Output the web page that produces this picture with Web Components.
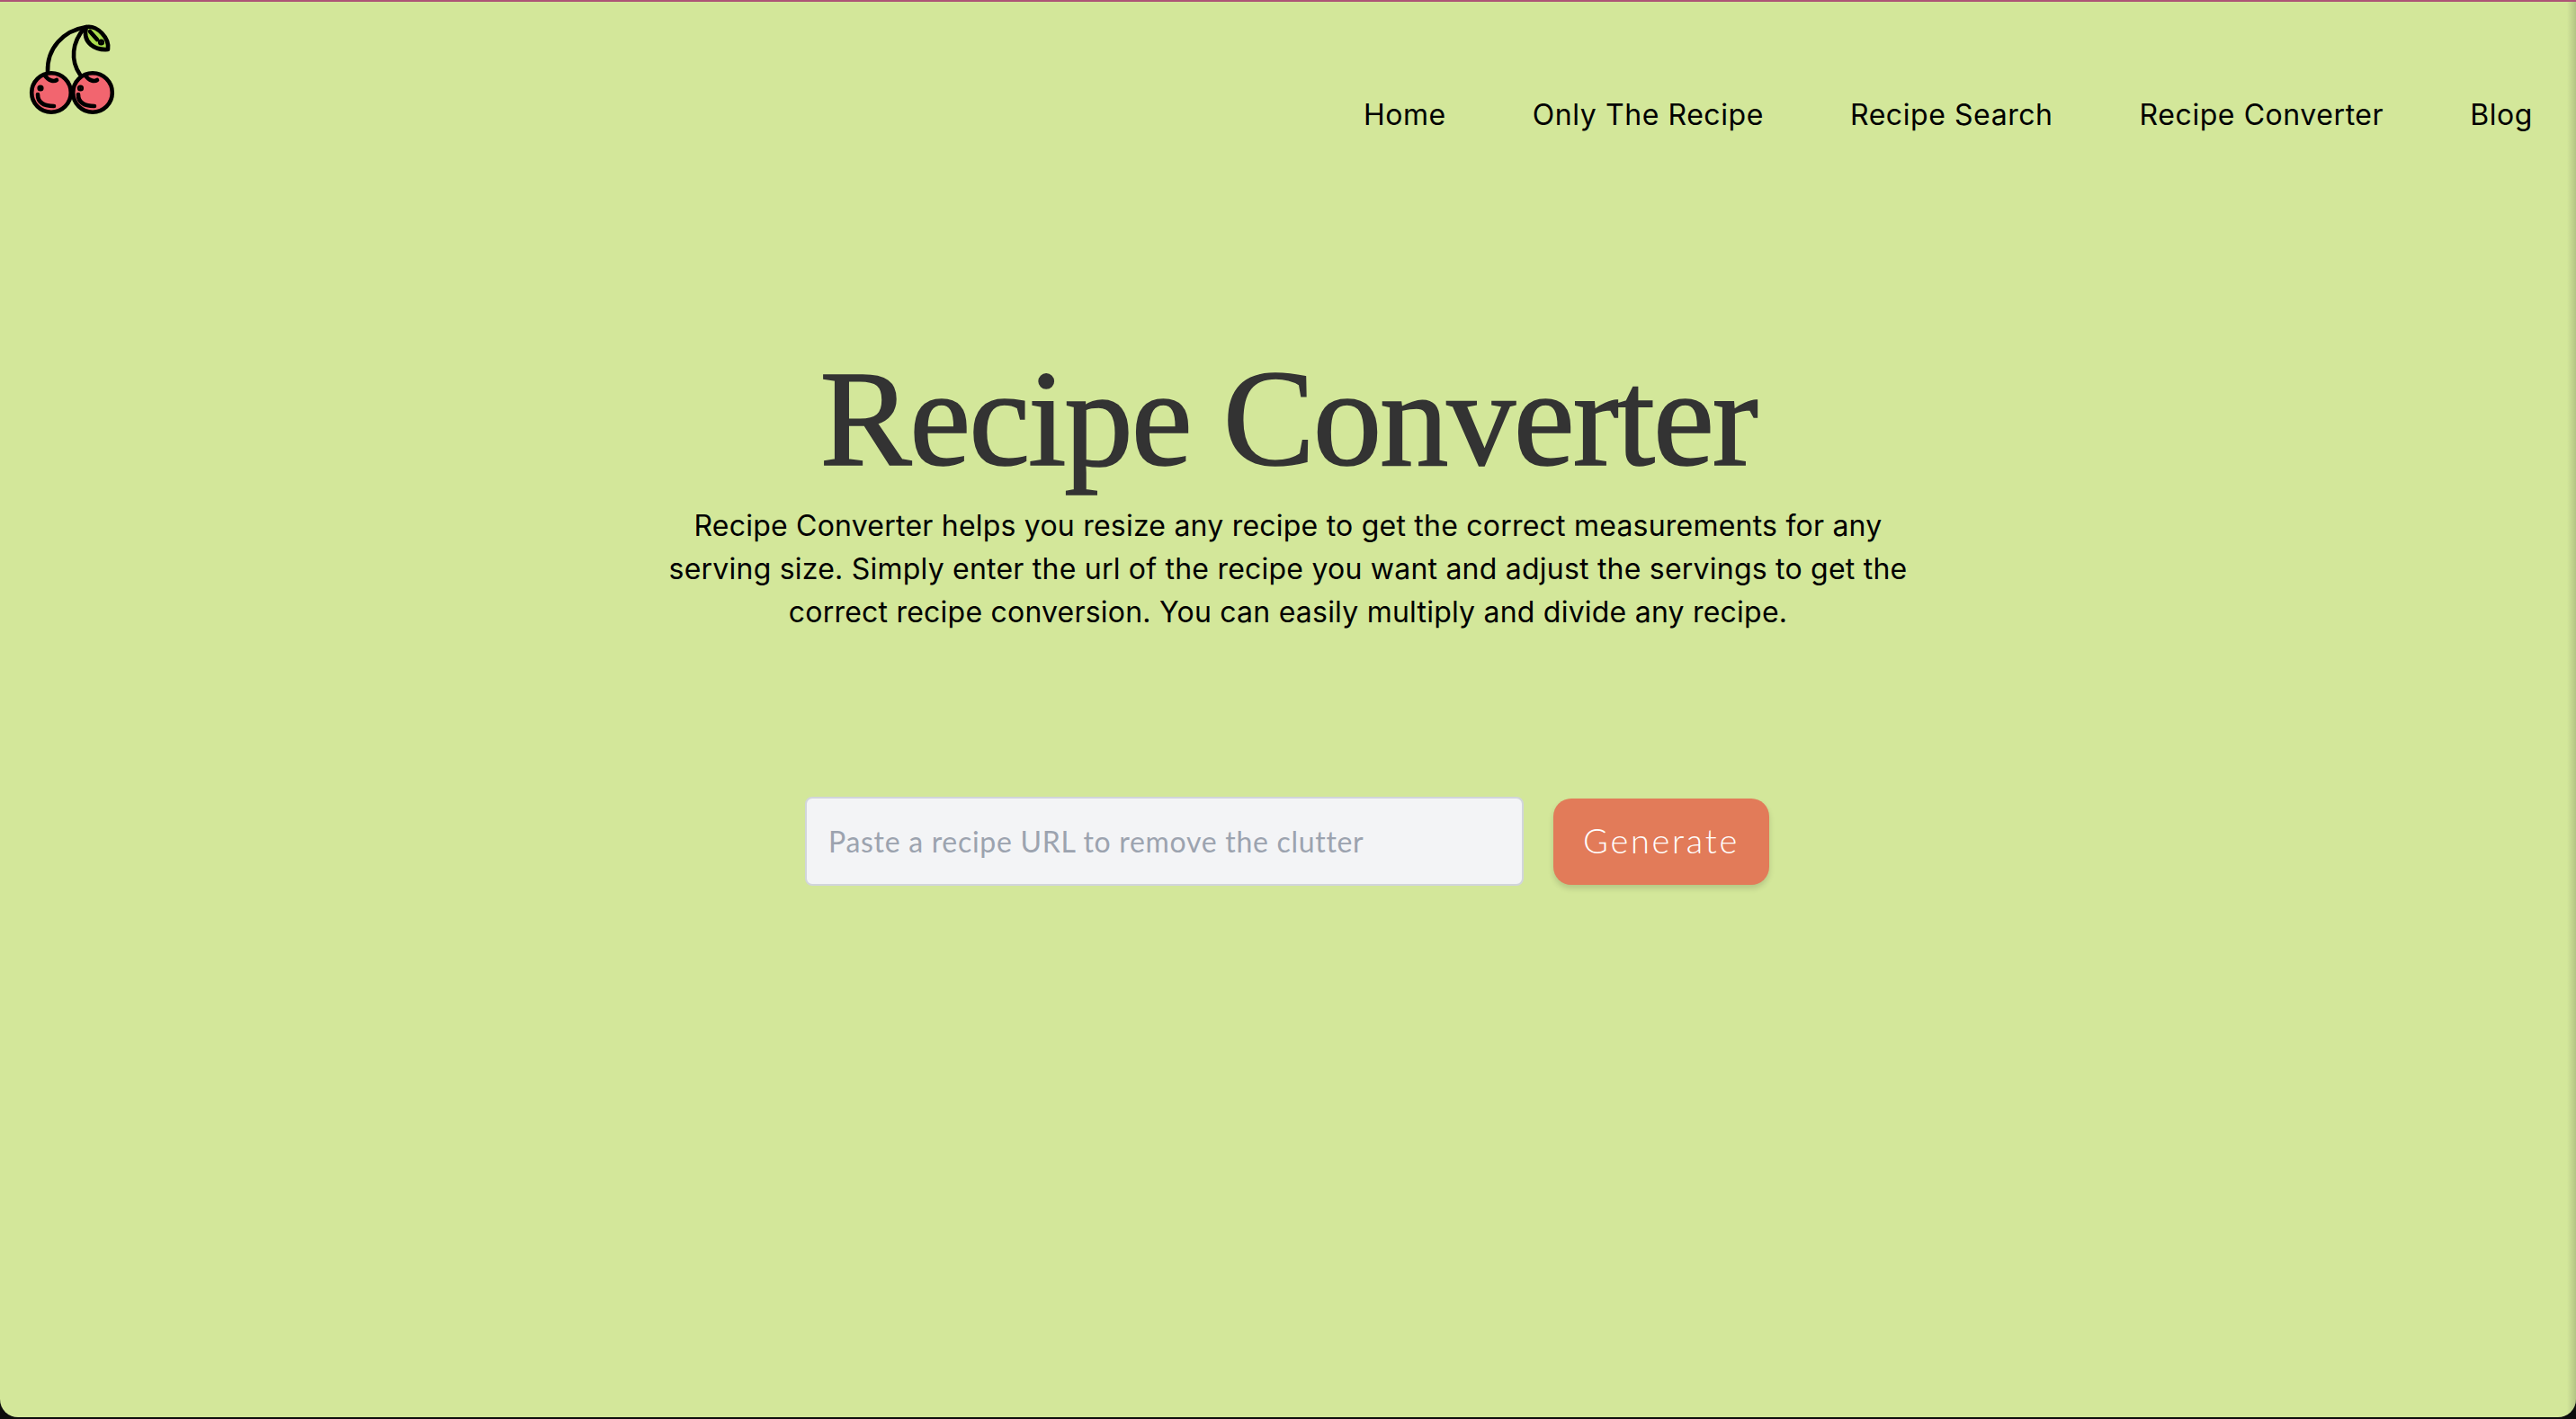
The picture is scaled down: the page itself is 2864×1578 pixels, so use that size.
<!DOCTYPE html>
<html lang="en"><head><meta charset="utf-8"><title>Recipe Converter</title>
<style>
html,body{margin:0;padding:0;background:#0c0c0c;height:100%;overflow:hidden}
</style></head><body>
<app-window>
  <site-header slot="header">
    <nav-link>Home</nav-link><nav-link>Only The Recipe</nav-link><nav-link>Recipe Search</nav-link><nav-link>Recipe Converter</nav-link><nav-link>Blog</nav-link>
  </site-header>
  <hero-intro heading="Recipe Converter">Recipe Converter helps you resize any recipe to get the correct measurements for any serving size. Simply enter the url of the recipe you want and adjust the servings to get the correct recipe conversion. You can easily multiply and divide any recipe.</hero-intro>
  <url-form></url-form>
</app-window>
<script>
function def(name,html){customElements.define(name,class extends HTMLElement{constructor(){super();this.attachShadow({mode:'open'}).innerHTML=typeof html==='function'?html(this):html;}});}
def('app-window',`<style>
:host{display:flex;flex-direction:column;box-sizing:border-box;height:1576px;background:#d3e79a;border-top:2px solid #ad5476;border-radius:0 0 20px 20px;overflow:hidden;position:relative;font-family:Inter,"Liberation Sans",sans-serif;color:#000}
.edge{position:absolute;top:0;right:0;bottom:0;width:10px;background:linear-gradient(to right,rgba(120,130,90,0),rgba(120,130,90,.35));pointer-events:none}
</style><slot name="header"></slot><slot></slot><div class="edge"></div>`);
def('site-header',`<style>
:host{display:flex;justify-content:space-between;align-items:flex-start;box-sizing:border-box;height:186px;padding:24px 48px 0 32px}
svg{display:block;width:96px;height:104px}
nav{display:flex;gap:96px;padding-top:80px}
</style>
<svg viewBox="32 24 96 104" fill="none" stroke="#000" stroke-width="4.600" stroke-linecap="round" stroke-linejoin="round" aria-label="Cherry logo">
<path d="M96 28C108 26 122 40 120 53C106 54 91 46 96 28Z" fill="#a9dc4c"/>
<path d="M100 33L108 42"/><circle cx="112.500" cy="45" r="1.300" fill="#000"/>
<path d="M96 28C70 32 52 52 53 78"/><path d="M94 29C80 45 78 65 89 81"/>
<circle cx="57" cy="101" r="21.800" fill="#f2656f"/><circle cx="103" cy="101" r="21.800" fill="#f2656f"/>
<path d="M50 82C54 88 60 89 63 87"/><path d="M42 103C42 112 49 116 60 116"/><circle cx="45" cy="96" r="1.300" fill="#000"/>
<path d="M95 82C99 88 105 89 108 87"/><path d="M87 103C87 112 94 116 105 116"/><circle cx="89.500" cy="96" r="1.300" fill="#000"/>
</svg><nav><slot></slot></nav>`);
def('nav-link',`<style>:host{display:block;font-size:32px;line-height:44px;white-space:nowrap;letter-spacing:.57px}</style><slot></slot>`);
def('hero-intro',el=>`<style>
:host{display:block;text-align:center;padding-top:192px}
h1{margin:0;font:400 153px/172px "Liberation Serif",serif;color:#333;letter-spacing:-2.1px;-webkit-text-stroke:1.6px #333}
p{margin:9px auto 0;width:1400px;font-size:32px;line-height:48px;color:#000;letter-spacing:.22px}
</style><h1>${el.getAttribute('heading')}</h1><p><slot></slot></p>`);
def('url-form',`<style>
:host{display:flex;justify-content:center;align-items:center;gap:33px;margin:181px 2px 0 0}
input{box-sizing:border-box;width:799px;height:99px;border:2px solid #d1d5db;border-radius:8px;background:#f3f4f6;padding:0 24px;font:400 32px Lato,sans-serif;outline:none;letter-spacing:.7px}
input::placeholder{color:#9ca3af;opacity:1}
button{box-sizing:border-box;width:240px;height:96px;border:0;border-radius:20px;background:#e27b59;color:#fff;font:300 38px Lato,sans-serif;letter-spacing:2.700px;padding:0 0 3px;box-shadow:0 4px 6px rgba(0,0,0,.14)}
</style><input type="text" placeholder="Paste a recipe URL to remove the clutter"><button>Generate</button>`);
</script></body></html>
